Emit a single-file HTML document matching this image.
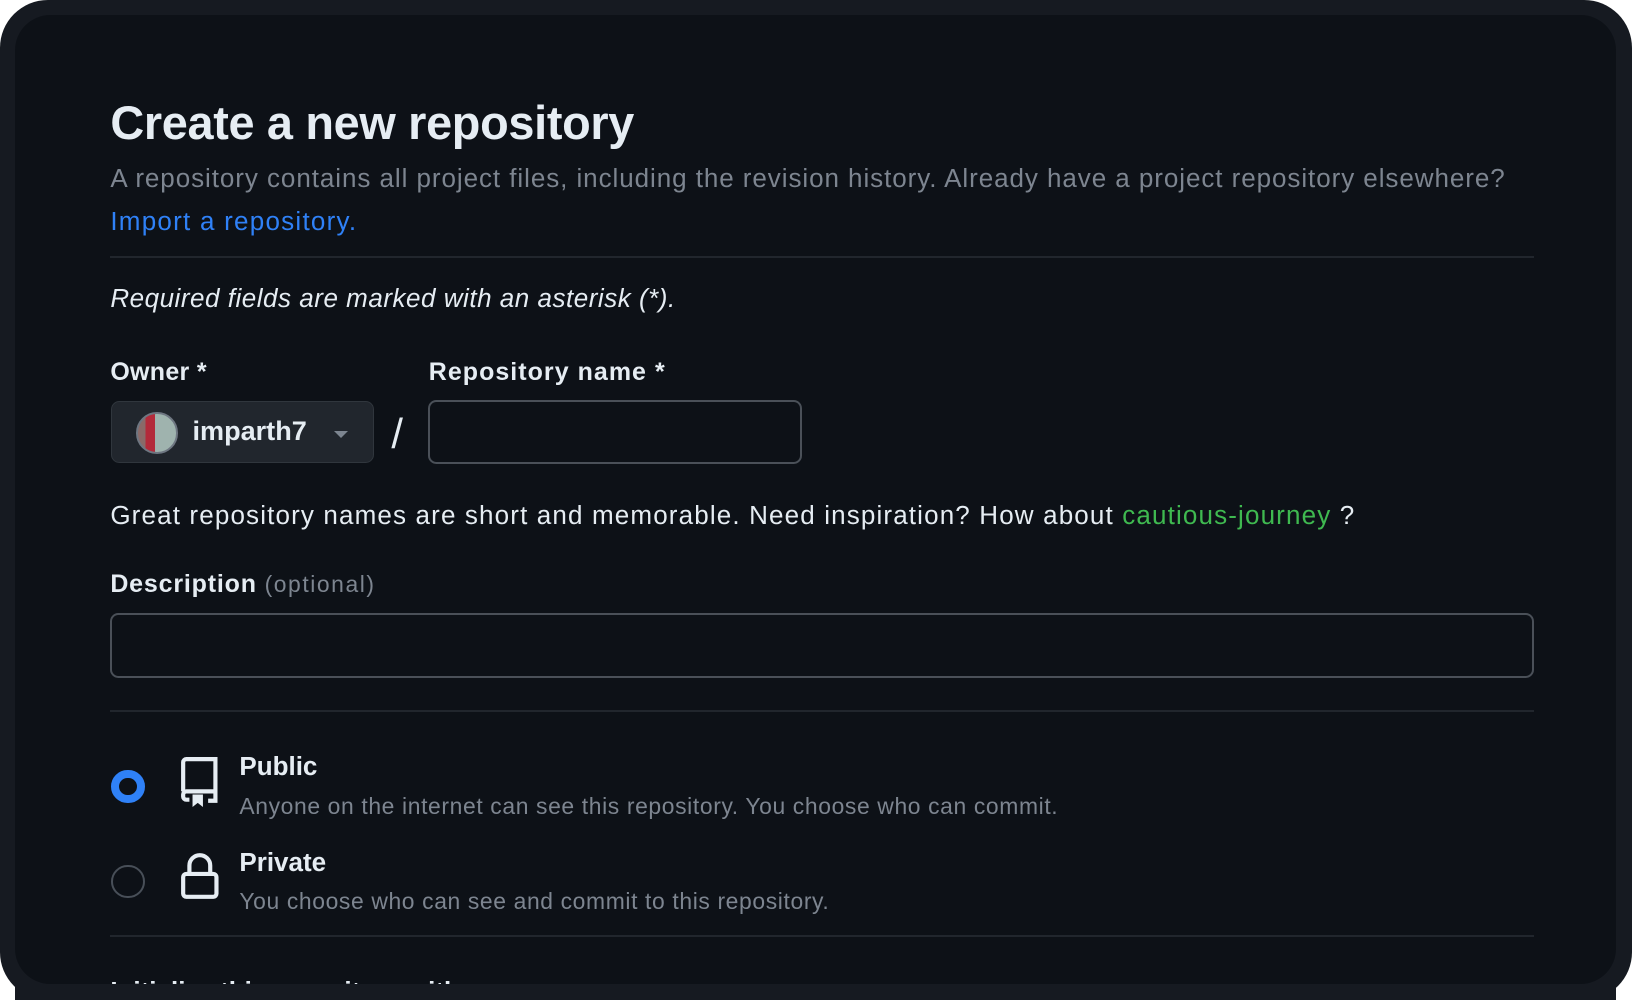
<!DOCTYPE html>
<html><head><meta charset="utf-8"><style>
html,body{margin:0;padding:0;background:#fff;width:1632px;height:1000px;overflow:hidden}
#z{zoom:1.0408;width:1568px;height:961px;position:relative}
.outer{position:absolute;left:0;top:0;width:1568px;height:961px;background:#161a21;border-radius:46px}
.inner{position:absolute;left:14px;top:14px;width:1539px;height:931px;background:#0d1117;border-radius:34px;overflow:hidden}
.t{position:absolute;font-family:"Liberation Sans",sans-serif;white-space:nowrap;color:#e6edf3}
.hr{position:absolute;left:92px;width:1368px;height:2px;background:#21262d}
</style></head><body><div id="z">
<div class="outer"></div>
<div class="inner">
<div class="t" style="left:92px;top:78px;font-size:45px;font-weight:bold;letter-spacing:-0.3px">Create a new repository</div>
<div class="t" style="left:92px;top:143px;font-size:25px;color:#7d8590;letter-spacing:0.9px">A repository contains all project files, including the revision history. Already have a project repository elsewhere?</div>
<div class="t" style="left:92px;top:184px;font-size:25px;color:#2f81f7;letter-spacing:1.2px">Import a repository.</div>
<div class="hr" style="top:232px"></div>
<div class="t" style="left:92px;top:258px;font-size:25px;font-style:italic;letter-spacing:0.5px">Required fields are marked with an asterisk (*).</div>
<div class="t" style="left:92px;top:330px;font-size:24px;font-weight:bold;letter-spacing:0.3px">Owner *</div>
<div class="t" style="left:398px;top:330px;font-size:24px;font-weight:bold;letter-spacing:1px">Repository name *</div>
<div style="position:absolute;left:93px;top:371px;width:252px;height:60px;background:#21262d;border:1px solid #30363d;border-radius:8px;box-sizing:border-box"></div>
<div style="position:absolute;left:117px;top:382px;width:40px;height:40px;border-radius:50%;background:linear-gradient(90deg,#8a6a68 0 20%,#b32a3a 20% 45%,#9fb3ae 45%);border:2px solid #6e7681;box-sizing:border-box"></div>
<div class="t" style="left:171px;top:386px;font-size:26px;font-weight:bold;color:#e6edf3">imparth7</div>
<div style="position:absolute;left:307px;top:400px;width:0;height:0;border-left:7px solid transparent;border-right:7px solid transparent;border-top:7px solid #7d8590"></div>
<div class="t" style="left:362px;top:380px;font-size:40px;color:#e6edf3">/</div>
<div style="position:absolute;left:397px;top:370px;width:360px;height:62px;border:2px solid #4a5058;border-radius:8px;box-sizing:border-box"></div>
<div class="t" style="left:92px;top:466px;font-size:25px;letter-spacing:1.1px">Great repository names are short and memorable. Need inspiration? How about <span style="color:#3fb950">cautious-journey</span> ?</div>
<div class="t" style="left:92px;top:534px;font-size:24px;font-weight:bold;letter-spacing:0.8px">Description <span style="font-weight:normal;color:#7d8590;font-size:22px;letter-spacing:1.5px">(optional)</span></div>
<div style="position:absolute;left:92px;top:575px;width:1368px;height:62px;border:2px solid #4a5058;border-radius:8px;box-sizing:border-box"></div>
<div class="hr" style="top:668px"></div>
<div style="position:absolute;left:93px;top:726px;width:32px;height:32px;border-radius:50%;border:8px solid #2f81f7;box-sizing:border-box"></div>
<svg style="position:absolute;left:158px;top:712px" width="40" height="50" viewBox="0 0 40 50" fill="none" stroke="#e6edf3" stroke-width="4">
<path d="M4 34V6a3 3 0 0 1 3-3h28v31H7a3 3 0 0 0-3 3v2a3 3 0 0 0 3 3h3M28 43h7V34"/>
<path d="M13 37h10v12l-5-4-5 4z" fill="#e6edf3" stroke="none"/></svg>
<div class="t" style="left:216px;top:708px;font-size:25px;font-weight:bold">Public</div>
<div class="t" style="left:216px;top:748px;font-size:22px;color:#7d8590;letter-spacing:0.6px">Anyone on the internet can see this repository. You choose who can commit.</div>
<div style="position:absolute;left:93px;top:817px;width:32px;height:32px;border-radius:50%;border:2px solid #484f58;box-sizing:border-box"></div>
<svg style="position:absolute;left:158px;top:804px" width="40" height="50" viewBox="0 0 40 50" fill="none" stroke="#e6edf3" stroke-width="4">
<path d="M10 22v-8a10 10 0 0 1 20 0v8"/><rect x="4" y="22" width="32" height="22" rx="3"/></svg>
<div class="t" style="left:216px;top:800px;font-size:25px;font-weight:bold">Private</div>
<div class="t" style="left:216px;top:839px;font-size:22px;color:#7d8590;letter-spacing:0.6px">You choose who can see and commit to this repository.</div>
<div class="hr" style="top:884px"></div>
<div class="t" style="left:92px;top:924px;font-size:25px;font-weight:bold">Initialize this repository with:</div>
</div>
<div style="position:absolute;left:14px;top:945px;width:1539px;height:16px;background:#161a21"></div>
</div></body></html>
